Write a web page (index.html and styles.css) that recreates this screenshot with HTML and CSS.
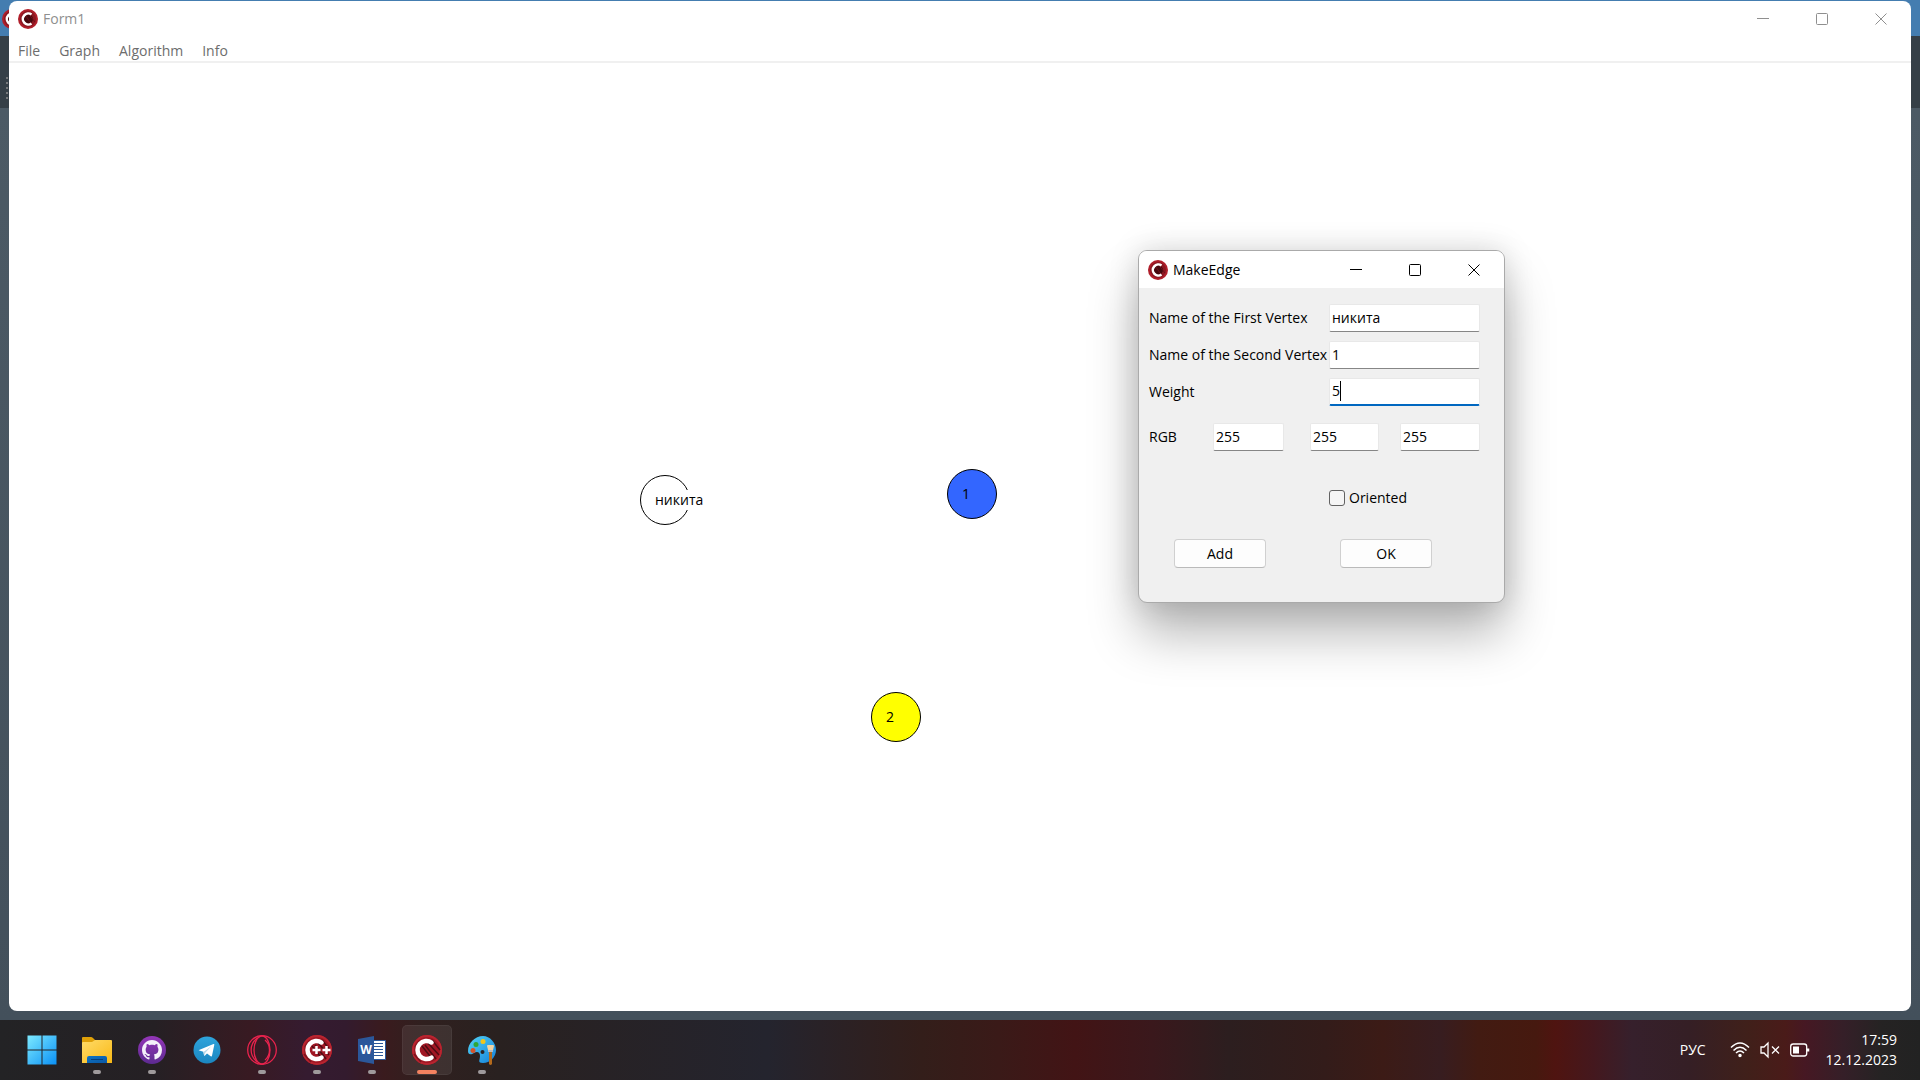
FILE: index.html
```html
<!DOCTYPE html>
<html lang="ru">
<head>
<meta charset="utf-8">
<title>Form1</title>
<link rel="stylesheet" href="styles.css">
</head>
<body>
<svg class="defs" aria-hidden="true">
  <defs>
    <linearGradient id="win" x1="0" y1="0" x2="1" y2="1"><stop offset="0" stop-color="#7deaff"/><stop offset="1" stop-color="#0a90f5"/></linearGradient>
    <linearGradient id="folder" x1="0" y1="0" x2="1" y2="1"><stop offset="0" stop-color="#ffdb68"/><stop offset="1" stop-color="#f9b916"/></linearGradient>
    <linearGradient id="tray" x1="0" y1="0" x2="1" y2="1"><stop offset="0" stop-color="#0e74c4"/><stop offset="1" stop-color="#0a57a5"/></linearGradient>
    <linearGradient id="git" x1="0" y1="0" x2="0" y2="1"><stop offset="0" stop-color="#9436b8"/><stop offset="1" stop-color="#5c2a91"/></linearGradient>
    <linearGradient id="tele" x1="0" y1="0" x2="0" y2="1"><stop offset="0" stop-color="#2ea4dc"/><stop offset="1" stop-color="#1b86c0"/></linearGradient>
    <linearGradient id="paint" x1="0" y1="0" x2="1" y2="1"><stop offset="0" stop-color="#52d3f7"/><stop offset="1" stop-color="#1480d8"/></linearGradient>
    <symbol id="c-logo" viewBox="0 0 30 30">
      <circle cx="15" cy="15" r="15" fill="#a01724"/>
      <circle cx="15" cy="15" r="14" fill="none" stroke="#b92530" stroke-width="2"/>
      <path d="M13 10L24 24M10 11L21 25M16 8L27 20M20 5L28 15" stroke="#4d0d14" stroke-width="1.500"/>
      <path d="M2 19L9 27M3 12L8 6" stroke="#7d141e" stroke-width="1.500"/>
      <path d="M19.500 7.500A9 9 0 1 0 19.500 22.500" fill="none" stroke="#fff" stroke-width="4.500" stroke-linecap="round"/>
    </symbol>
    <symbol id="c-small" viewBox="0 0 20 20">
      <circle cx="10" cy="10" r="10" fill="#b01e2a"/>
      <circle cx="10" cy="10" r="8" fill="#8d1822"/>
      <circle cx="10.500" cy="10" r="4.500" fill="#45090f"/>
      <path d="M10 4L17 13M8 7L14 16" stroke="#6d1019" stroke-width="1"/>
      <path d="M13.500 5.500A5.500 5.500 0 1 0 13.500 14.500" fill="none" stroke="#fff" stroke-width="2.500"/>
    </symbol>
  </defs>
</svg>

<main class="desktop">
  <div class="back-window" aria-hidden="true">
    <svg class="back-logo" width="20" height="20"><use href="#c-small"/></svg>
    <span class="back-grip"></span>
  </div>

  <section class="form-window">
    <header class="titlebar inactive">
      <svg width="20" height="20"><use href="#c-small"/></svg>
      <h1 class="title">Form1</h1>
      <button class="caption" aria-label="Minimize"><svg width="12" height="12"><path d="M0 5.500H12"/></svg></button>
      <button class="caption" aria-label="Maximize"><svg width="12" height="12"><rect x=".5" y=".5" width="11" height="11" rx="1"/></svg></button>
      <button class="caption" aria-label="Close"><svg width="12" height="12"><path d="M.5.5l11 11M11.500.5l-11 11"/></svg></button>
    </header>
    <nav class="menu">
      <button>File</button><button>Graph</button><button>Algorithm</button><button>Info</button>
    </nav>
    <div class="canvas">
      <div class="vertex first"><span>никита</span></div>
      <div class="vertex second"><span>1</span></div>
      <div class="vertex third"><span>2</span></div>
    </div>
  </section>

  <section class="dialog" role="dialog" aria-labelledby="dialog-title">
    <header class="titlebar">
      <svg width="20" height="20"><use href="#c-small"/></svg>
      <h2 class="title" id="dialog-title">MakeEdge</h2>
      <button class="caption" aria-label="Minimize"><svg width="12" height="12"><path d="M0 5.500H12"/></svg></button>
      <button class="caption" aria-label="Maximize"><svg width="12" height="12"><rect x=".5" y=".5" width="11" height="11" rx="1"/></svg></button>
      <button class="caption" aria-label="Close"><svg width="12" height="12"><path d="M.5.5l11 11M11.500.5l-11 11"/></svg></button>
    </header>
    <form class="edge-form">
      <div class="row"><label for="first">Name of the First Vertex</label><input class="field" id="first" type="text" value="никита"></div>
      <div class="row"><label for="second">Name of the Second Vertex</label><input class="field" id="second" type="text" value="1"></div>
      <div class="row"><label for="weight">Weight</label><div class="active-field"><input class="field" id="weight" type="text" value="5"></div></div>
      <div class="row rgb">
        <label for="red">RGB</label>
        <input class="field red" id="red" type="text" value="255">
        <input class="field green" type="text" value="255" aria-label="Green">
        <input class="field" type="text" value="255" aria-label="Blue">
      </div>
      <div class="check"><input type="checkbox" id="oriented"><label for="oriented">Oriented</label></div>
      <div class="actions"><button type="button">Add</button><button type="button">OK</button></div>
    </form>
  </section>
</main>

<footer class="taskbar">
  <div class="apps">
    <button class="app" aria-label="Start"><svg width="30" height="30"><path d="M.5.5h29v29h-29z" fill="url(#win)"/><path d="M15 0v30M0 15h30" stroke="#222327"/></svg></button>
    <button class="app open" aria-label="Explorer"><svg width="30" height="30"><path d="M0 3q0-1 1-1h8q1 0 2 1l2 2v4H0z" fill="#dfa008"/><path d="M0 8q0-1 1-1h9l3-2h16q1 0 1 1v22H0z" fill="url(#folder)"/><path d="M5 28v-5q0-2 2-2h16q2 0 2 2v5z" fill="url(#tray)"/><path d="M9 24.500h12" stroke="#063f7c"/></svg></button>
    <button class="app open" aria-label="GitHub"><svg width="28" height="28" viewBox="0 0 28 28"><circle cx="14" cy="14" r="14" fill="url(#git)"/><path transform="translate(4 4) scale(1.25)" fill="#f4f0fa" d="M8 0C3.580 0 0 3.580 0 8c0 3.540 2.290 6.530 5.470 7.590.4.070.55-.17.55-.38 0-.19-.01-.82-.01-1.490-2.010.37-2.530-.49-2.690-.94-.09-.23-.48-.94-.82-1.130-.28-.15-.68-.52-.01-.53.63-.01 1.080.58 1.230.82.72 1.210 1.870.87 2.330.66.070-.52.28-.87.51-1.070-1.780-.2-3.640-.89-3.640-3.950 0-.87.31-1.590.82-2.150-.08-.2-.36-1.020.08-2.120 0 0 .67-.21 2.200.82.64-.18 1.320-.27 2-.27s1.360.09 2 .27c1.530-1.040 2.200-.82 2.200-.82.44 1.100.16 1.920.08 2.120.51.56.82 1.270.82 2.150 0 3.070-1.870 3.750-3.650 3.950.29.25.54.73.54 1.480 0 1.070-.01 1.930-.01 2.200 0 .21.15.46.55.38A8.010 8.010 0 0 0 16 8c0-4.420-3.580-8-8-8z"/></svg></button>
    <button class="app" aria-label="Telegram"><svg width="28" height="28" viewBox="0 0 28 28"><circle cx="14" cy="14" r="13.500" fill="url(#tele)"/><path d="M6 14L20.500 8q1-.3.800.8l-2.300 11q-.3 1-1.300.4L14 17.500 12 19.600q-.8.700-1-.4l-.7-3.400-4-1.200q-1-.3-.3-.6z" fill="#fff"/><path d="M10.500 16l8-6-6 6.500-1.300 3z" fill="#b9d9ea"/></svg></button>
    <button class="app open" aria-label="Opera"><svg width="30" height="30"><g fill="none" stroke="#e8234d" stroke-width="1.300"><circle cx="15" cy="15" r="14.300"/><ellipse cx="15" cy="15" rx="8" ry="14"/><path d="M10.500 3C2 9 2 21 10.500 27"/><path d="M18 5c6 5 6 15 0 20"/></g></svg></button>
    <button class="app open" aria-label="C++ Builder"><svg width="30" height="30"><use href="#c-logo"/><path d="M10.500 15h8M14.500 11v8M20.500 15h8M24.500 11v8" stroke="#fff" stroke-width="2.500"/></svg></button>
    <button class="app open" aria-label="Word"><svg width="28" height="28" viewBox="0 0 28 28"><path d="M15 4.500h12.500v19H15z" fill="#fff" stroke="#2b579a"/><path d="M16 7.500h9M16 10.500h9M16 13.500h9M16 16.500h9M16 19.500h9" stroke="#2b579a"/><path d="M0 3L16 0v28L0 25z" fill="#2b579a"/><text x="8" y="18" text-anchor="middle" class="word-letter">W</text></svg></button>
    <button class="app open active" aria-label="Form1"><svg width="30" height="30"><use href="#c-logo"/></svg></button>
    <button class="app open" aria-label="Paint"><svg width="30" height="30"><path d="M16 1C8 1 1 8 1 16c0 4 3 4 6 2s6-1 6 3-3 7 3 7c7 0 13-6 13-13S23 1 16 1z" fill="url(#paint)"/><circle cx="15.500" cy="17" r="2" fill="#292528"/><circle cx="16" cy="6.500" r="2.500" fill="#f2c51b"/><circle cx="9" cy="9.500" r="2.500" fill="#2fa739"/><circle cx="6" cy="15.500" r="2.500" fill="#d65229"/><path d="M22 16h3v13q-1.500 2-3 0z" fill="#b46a1c"/><path d="M20 11q0-1 1-1h5q1 0 1 1l-1 4h-5z" fill="#f2d4a4"/><path d="M21 15h5v2h-5z" fill="#b8bcc0"/></svg></button>
  </div>
  <div class="tray">
    <button class="lang">РУС</button>
    <div class="status">
      <svg width="20" height="20" fill="none" stroke="#fff" stroke-width="1.500"><path d="M1 7.500Q10-1.500 19 7.500M3.500 10.500q6.500-6.500 13 0M6 13q4-4 8 0"/><circle cx="10" cy="15.500" r="1" fill="#fff"/></svg>
      <svg width="20" height="20" fill="none" stroke="#fff" stroke-width="1.300"><path d="M1 7h3l4-4v14l-4-4H1zM12 6.500l7 7M19 6.500l-7 7"/></svg>
      <svg width="20" height="20" fill="none" stroke="#fff" stroke-width="1.300"><rect x=".7" y="4" width="16" height="12" rx="2.500"/><path d="M3 6.500h6v7H3z" fill="#fff" stroke="none"/><path d="M18 8.500v3" stroke-width="2.500"/></svg>
    </div>
    <div class="clock"><time>17:59</time><time>12.12.2023</time></div>
  </div>
</footer>
</body>
</html>
```
FILE: styles.css
```css
* { box-sizing: border-box; }

body {
  margin: 0;
  min-height: 100vh;
  display: flex;
  flex-direction: column;
  font: 14px/20px "Open Sans", "Noto Sans", sans-serif;
  color: #000;
}

button, input { font: inherit; color: inherit; }
button { border: 0; padding: 0; background: none; }
.defs { position: absolute; width: 0; height: 0; }

.desktop {
  flex: 1;
  display: flex;
  position: relative;
  padding: 1px 9px 9px;
  background: linear-gradient(#447db0 36px, #353f47 36px 108px, #4c5a65 108px, #43505b);
}
.back-window { position: absolute; inset: 0; overflow: hidden; }
.back-logo { position: absolute; left: 2px; top: 9px; }
.back-grip {
  position: absolute;
  left: 6px;
  top: 77px;
  width: 2px;
  height: 24px;
  background: repeating-linear-gradient(#77797c 0 2px, transparent 2px 5px);
}

.form-window {
  flex: 1;
  display: flex;
  flex-direction: column;
  position: relative;
  background: #fff;
  border-radius: 8px;
  overflow: hidden;
}

.titlebar { display: flex; align-items: center; height: 36px; padding: 0 1px 0 9px; }
.title { flex: 1; margin: 0 0 0 5px; font-size: 14px; font-weight: 400; }
.caption { width: 59px; height: 36px; display: grid; place-items: center; }
.caption svg { fill: none; stroke: currentColor; }
.inactive .title, .inactive .caption { color: #8f8f8f; }

.menu {
  display: flex;
  gap: 19px;
  height: 26px;
  padding: 4px 9px 0;
  border-bottom: 2px solid #f0f0f0;
  color: #6d6d6d;
}
.menu button { height: 20px; }

.canvas { flex: 1; position: relative; }
.vertex {
  position: absolute;
  width: 50px;
  height: 50px;
  padding: 14px 0 0 14px;
  border: 1px solid #000;
  border-radius: 50%;
}
.vertex span { display: inline-block; background: inherit; }
.first { left: 631px; top: 412px; background: #fff; }
.second { left: 938px; top: 406px; background: #3366ff; }
.third { left: 862px; top: 629px; background: #ffff00; }

.dialog {
  position: absolute;
  left: 1138px;
  top: 250px;
  width: 367px;
  border: 1px solid #aaa;
  border-radius: 9px;
  background: #f0f0f0;
  box-shadow: 0 32px 50px rgba(0, 0, 0, .28), 0 0 30px rgba(0, 0, 0, .15);
}
.dialog .titlebar { height: 37px; background: #fff; border-radius: 8px 8px 0 0; }

.edge-form { display: flex; flex-direction: column; gap: 9px; padding: 16px 24px 34px 10px; }
.row { display: grid; grid-template-columns: 180px 1fr; align-items: center; height: 28px; white-space: nowrap; }
.rgb { grid-template-columns: 64px 97px 90px 1fr; margin-top: 8px; }
.field {
  width: 100%;
  height: 28px;
  padding: 0 2px 2px;
  border: 1px solid #e8e8e8;
  border-bottom-color: #868686;
  border-radius: 2px;
  background: #fff;
  outline: none;
}
.red { width: 71px; }
.green { width: 69px; }
.active-field { position: relative; }
.active-field .field { display: block; border-bottom: 2px solid #0067c0; }
.active-field::after {
  content: "";
  position: absolute;
  left: 11px;
  top: 3px;
  width: 1px;
  height: 20px;
  background: #000;
}

.check { display: flex; align-items: center; gap: 4px; padding: 28px 0 22px 180px; }
.check input {
  appearance: none;
  width: 16px;
  height: 16px;
  margin: 0;
  border: 1px solid #626262;
  border-radius: 3px;
  background: #f5f5f5;
}
.actions { display: flex; gap: 74px; padding-left: 25px; }
.actions button {
  width: 92px;
  height: 29px;
  border: 1px solid #d0d0d0;
  border-bottom-color: #bababa;
  border-radius: 4px;
  background: #fdfdfd;
}

.taskbar {
  height: 60px;
  display: flex;
  align-items: center;
  justify-content: space-between;
  padding: 0 23px 0 17px;
  color: #fff;
  background: linear-gradient(90deg, #232325, #252024 8%, #381a22 13%, #351b30 16%, #331b2e 18%, #3a1b1e 20%, #30201f 22%, #292120 26%, #24242e 40%, #331e1a 48%, #3a1a18 52%, #421415 56%, #3a181c 60%, #2c1e1f 64%, #331c1a 69%, #3c1b16 72%, #371d20 75%, #421b12 77%, #46190f 80%, #4f1410 81%, #44181e 83%, #36202c 85%, #351f25 88%, #40201a 91%, #4a1b19 93%, #461823 94%, #351f28 96%, #252323 98%, #222);
}
.apps { display: flex; gap: 5px; }
.app {
  position: relative;
  width: 50px;
  height: 50px;
  display: grid;
  place-items: center;
  border-radius: 5px;
}
.app.active { background: rgba(255, 255, 255, .08); box-shadow: inset 0 0 0 1px rgba(255, 255, 255, .05); }
.open::after {
  content: "";
  position: absolute;
  bottom: 1px;
  left: 21px;
  width: 8px;
  height: 4px;
  border-radius: 2px;
  background: #9f9a9c;
}
.active::after { left: 15px; width: 20px; background: #f48260; }
.word-letter { font: 700 12px "Open Sans", sans-serif; fill: #fff; }

.tray { display: flex; align-items: center; gap: 16px; }
.lang { margin-right: 8px; }
.status { display: flex; gap: 10px; }
.clock { display: flex; flex-direction: column; text-align: right; }
```
